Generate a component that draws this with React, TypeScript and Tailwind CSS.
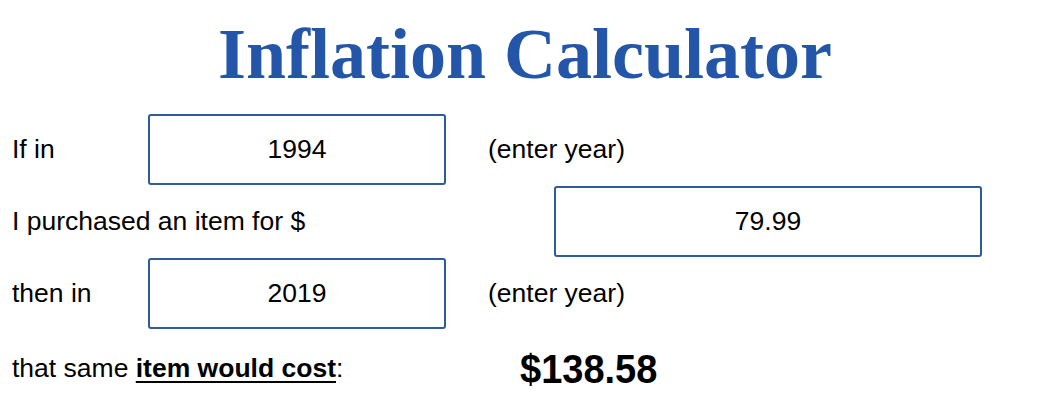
const boxCls =
  "flex h-[71px] items-center justify-center rounded-[3px] border-2 border-[#2f5b9a] bg-white text-[26.5px] text-black";

function YearRow({ label, year }: { label: string; year: string }) {
  return (
    <div className="flex items-center">
      <div className="w-[136px] text-[26.5px]">{label}</div>
      <div className={`${boxCls} w-[298px]`}>{year}</div>
      <div className="ml-[42px] text-[26.5px]">(enter year)</div>
    </div>
  );
}

export default function App() {
  return (
    <div className="h-[420px] w-[1050px] bg-white text-black [font-family:'Liberation_Sans',Arial,sans-serif]">
      <h1 className="pt-[12px] text-center text-[72px] leading-[84px] font-bold text-[#2356a8] [font-family:'Liberation_Serif','Times_New_Roman',serif]">
        Inflation Calculator
      </h1>

      <div className="flex flex-col gap-[1px] pl-[12px] pt-[18px]">
        <YearRow label="If in" year="1994" />

        <div className="flex items-center">
          <div className="w-[542px] text-[26.5px]">I purchased an item for $</div>
          <div className={`${boxCls} w-[428px]`}>79.99</div>
        </div>

        <YearRow label="then in" year="2019" />

        <div className="mt-[4px] flex h-[70px] items-center">
          <div className="w-[508px] text-[26.5px]">
            that same{" "}
            <span className="font-bold underline underline-offset-[4px]">item would cost</span>:
          </div>
          <div className="origin-left scale-x-[0.95] text-[40px] font-bold">$138.58</div>
        </div>
      </div>
    </div>
  );
}
